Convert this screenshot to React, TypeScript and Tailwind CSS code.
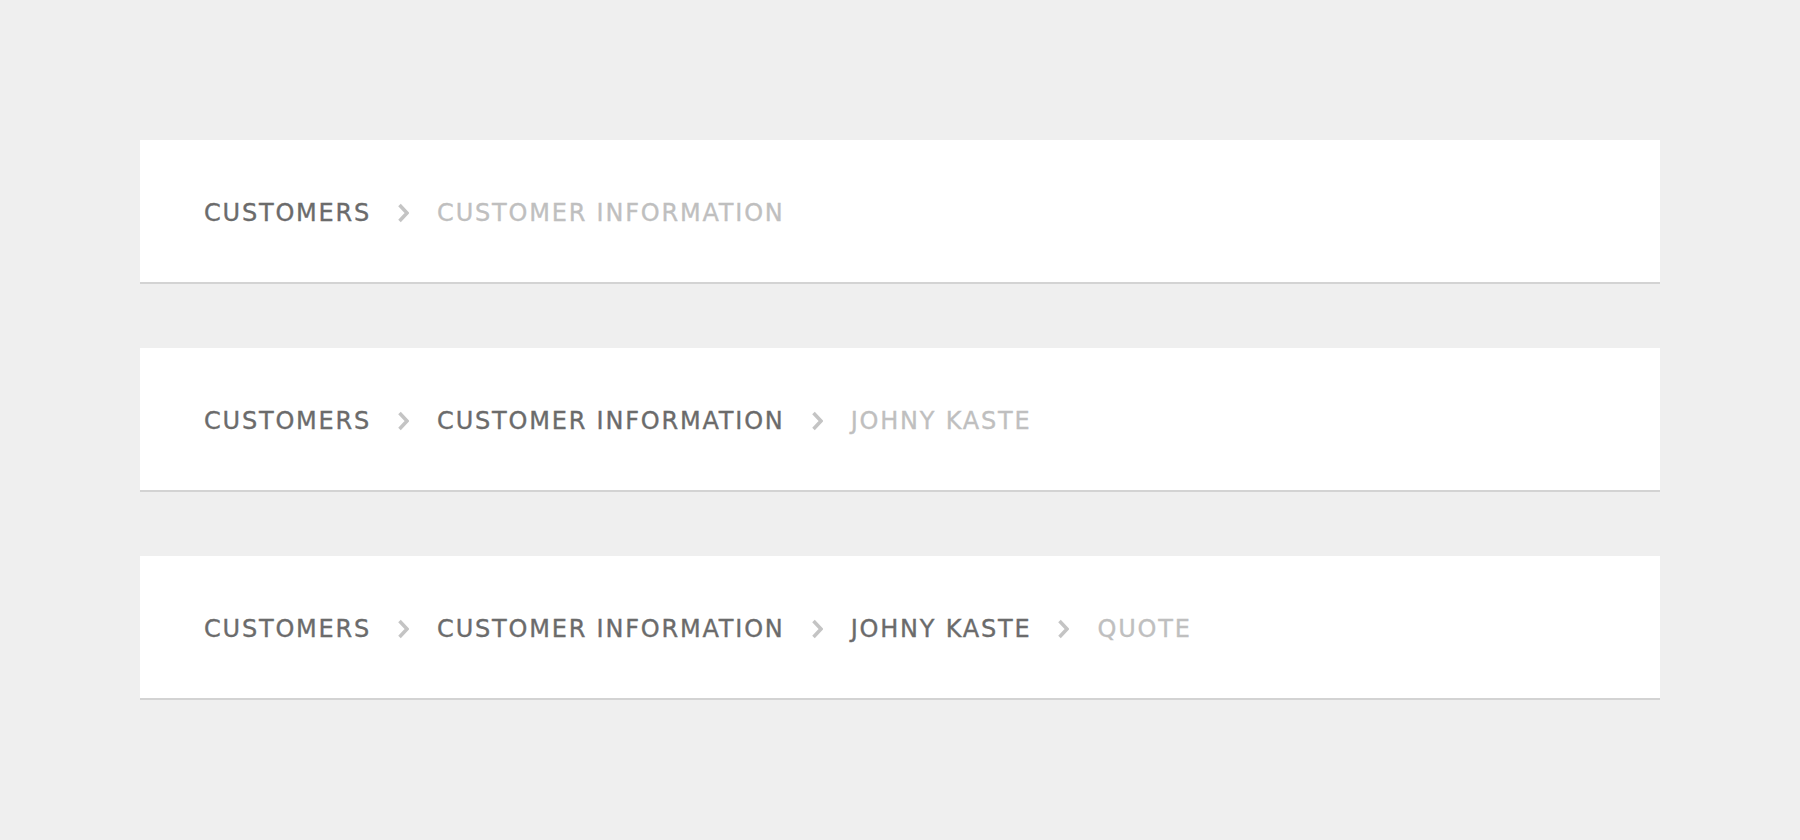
import React from "react";

type Crumb = { label: string };

const trails: Crumb[][] = [
  [{ label: "CUSTOMERS" }, { label: "CUSTOMER INFORMATION" }],
  [{ label: "CUSTOMERS" }, { label: "CUSTOMER INFORMATION" }, { label: "JOHNY KASTE" }],
  [{ label: "CUSTOMERS" }, { label: "CUSTOMER INFORMATION" }, { label: "JOHNY KASTE" }, { label: "QUOTE" }],
];

const Chevron = () => (
  <svg width="12" height="20" viewBox="0 0 12 20" className="ml-[26px] mr-[28px] shrink-0">
    <polyline points="2.5,2 10,10 2.5,18" fill="none" stroke="#c4c4c4" strokeWidth="3.5" />
  </svg>
);

const Breadcrumb = ({ items }: { items: Crumb[] }) => (
  <div className="bg-white h-[144px] border-b-2 border-[#d3d3d3] flex items-center pl-[64px] pt-[4px]">
    {items.map((item, i) => {
      const isLast = i === items.length - 1;
      return (
        <React.Fragment key={i}>
          {i > 0 && <Chevron />}
          <span
            className={`text-[24px] leading-[28px] tracking-[1.8px] whitespace-nowrap [-webkit-text-stroke:0.35px_currentColor] ${isLast ? "text-[#bfbfbf]" : "text-[#6b6b6b]"}`}
            style={{ fontFamily: '"DejaVu Sans", sans-serif' }}
          >
            {item.label}
          </span>
        </React.Fragment>
      );
    })}
  </div>
);

export default function App() {
  return (
    <div className="min-h-[840px] bg-[#efefef] px-[140px] pt-[140px] flex flex-col gap-[64px]">
      {trails.map((t, i) => (
        <Breadcrumb key={i} items={t} />
      ))}
    </div>
  );
}
